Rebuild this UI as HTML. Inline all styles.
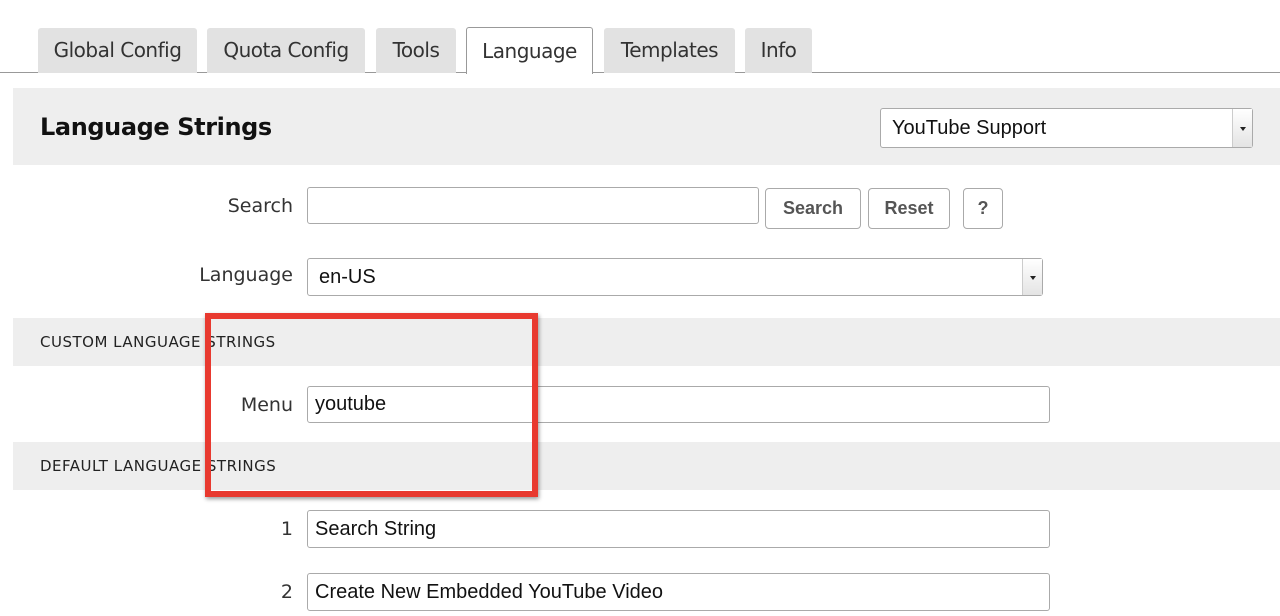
<!DOCTYPE html>
<html><head><style>
*{box-sizing:border-box;margin:0;padding:0}
body{width:1280px;height:616px;background:#fff;position:relative;overflow:hidden;font-family:"DejaVu Sans","Liberation Sans",sans-serif;color:#222}
.a{position:absolute}
.tab{position:absolute;top:28px;height:45px;background:#e2e2e2;border-radius:3px 3px 0 0;font-size:20px;color:#333;text-align:center;line-height:44px;letter-spacing:-0.5px}
.inp{position:absolute;background:#fff;border:1px solid #aaa;border-radius:3px;font-family:"Liberation Sans",sans-serif;font-size:20px;padding-left:7px;color:#111}
.lbl{position:absolute;right:987px;font-size:19px;color:#333;text-align:right}
.btn{position:absolute;top:188px;height:41px;border:1px solid #aaa;border-radius:4px;font-family:"Liberation Sans",sans-serif;font-weight:bold;font-size:18px;color:#555;text-align:center;line-height:39px;background:#fff}
.band{position:absolute;left:13px;right:0;background:#eee}
.cap{position:absolute;left:40px;font-size:15px;letter-spacing:0.5px;color:#222}
.arr{position:absolute;right:0;top:0;bottom:0;width:20px;border-left:1px solid #ccc;background:linear-gradient(#fff,#e4e4e4)}
.arr:after{content:"";position:absolute;left:7px;top:50%;margin-top:-1px;border:3px solid transparent;border-top:4px solid #222}
</style></head><body>
<div class="a" style="left:0;right:0;top:72px;height:1px;background:#999"></div>
<div class="tab" style="left:38px;width:159px">Global Config</div>
<div class="tab" style="left:207px;width:158px">Quota Config</div>
<div class="tab" style="left:376px;width:80px">Tools</div>
<div class="tab" style="left:466px;width:127px;top:27px;height:47px;background:#fff;border:1px solid #999;border-bottom:none;line-height:46px">Language</div>
<div class="tab" style="left:604px;width:131px">Templates</div>
<div class="tab" style="left:745px;width:67px">Info</div>

<div class="band" style="top:88px;height:77px"></div>
<div class="a" style="left:40px;top:113px;font-size:24px;font-weight:bold;color:#111;letter-spacing:-0.4px">Language Strings</div>
<div class="inp" style="left:880px;top:108px;width:373px;height:40px;line-height:38px;padding-left:11px">YouTube Support<div class="arr"></div></div>

<div class="lbl" style="top:195px">Search</div>
<div class="inp" style="left:307px;top:187px;width:452px;height:37px"></div>
<div class="btn" style="left:765px;width:96px">Search</div>
<div class="btn" style="left:868px;width:82px">Reset</div>
<div class="btn" style="left:963px;width:40px">?</div>

<div class="lbl" style="top:264px">Language</div>
<div class="inp" style="left:307px;top:258px;width:736px;height:38px;line-height:36px;padding-left:11px">en-US<div class="arr"></div></div>

<div class="band" style="top:318px;height:48px"></div>
<div class="cap" style="top:333px">CUSTOM LANGUAGE STRINGS</div>
<div class="lbl" style="top:394px">Menu</div>
<div class="inp" style="left:307px;top:386px;width:743px;height:37px;line-height:35px">youtube</div>

<div class="band" style="top:442px;height:48px"></div>
<div class="cap" style="top:457px">DEFAULT LANGUAGE STRINGS</div>

<div class="lbl" style="top:518px">1</div>
<div class="inp" style="left:307px;top:510px;width:743px;height:38px;line-height:36px">Search String</div>
<div class="lbl" style="top:581px">2</div>
<div class="inp" style="left:307px;top:573px;width:743px;height:38px;line-height:36px">Create New Embedded YouTube Video</div>

<div class="a" style="left:205px;top:313px;width:333px;height:184px;border:6px solid #e8392f;box-shadow:1px 2px 4px rgba(0,0,0,.4)"></div>
</body></html>
